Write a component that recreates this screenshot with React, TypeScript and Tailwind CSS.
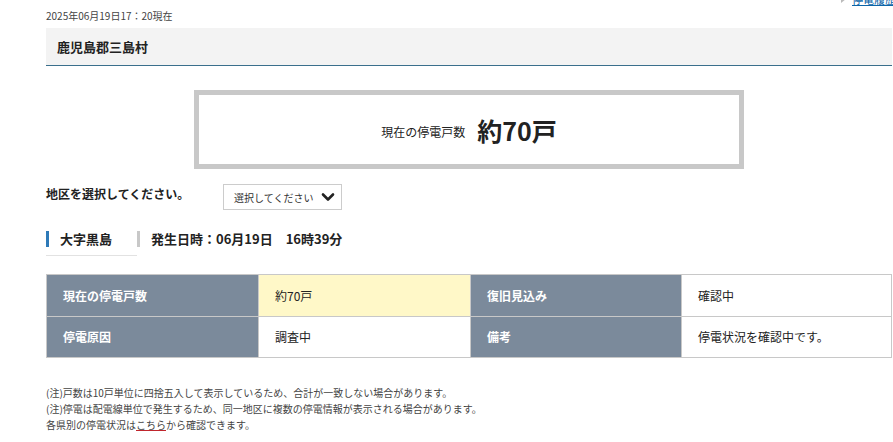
import React from 'react';

const font = { fontFamily: '"Noto Sans CJK JP", "Noto Sans", sans-serif' };

const Chevron: React.FC = () => (
  <svg width="14" height="10" viewBox="0 0 14 10" fill="none">
    <path d="M2 2.5 L7 7.5 L12 2.5" stroke="#222" strokeWidth="2.6" strokeLinecap="round" strokeLinejoin="round" />
  </svg>
);

const App: React.FC = () => {
  return (
    <div className="w-[893px] h-[442px] overflow-hidden bg-white text-[#333]" style={font}>
      <div className="relative ml-[46px] w-[846px]">
        <a className="absolute right-[-4px] top-[-9px] flex items-center gap-[6px] text-[11px] text-[#0b64a8] underline">
          <span className="inline-block w-0 h-0 border-y-[4px] border-y-transparent border-l-[5px] border-l-[#bbb]" />
          停電履歴
        </a>

        <div className="pt-[9px] h-[28px] text-[10px] leading-[14px] text-[#444]">2025年06月19日17：20現在</div>

        <div className="h-[38px] bg-[#f3f3f3] border-b-[1.5px] border-[#3a6f8c] flex items-center pl-[11px]">
          <h1 className="text-[13px] font-bold text-[#222]">鹿児島郡三島村</h1>
        </div>

        <div className="mt-[24px] mx-auto w-[550px] h-[79px] border-[5px] border-[#c8c8c8] flex items-center justify-center gap-[12px]">
          <span className="text-[12px] text-[#222] mt-[5px]">現在の停電戸数</span>
          <span className="text-[25px] font-bold text-[#222] leading-[30px]">約70戸</span>
        </div>

        <div className="mt-[15px] flex items-start">
          <p className="w-[177px] text-[12px] font-bold text-[#222] pt-[1px]">地区を選択してください。</p>
          <div className="w-[119px] h-[26px] border border-[#ccc] flex items-center justify-between pl-[10px] pr-[6px]">
            <span className="text-[10px] text-[#333]">選択してください</span>
            <Chevron />
          </div>
        </div>

        <div className="mt-[21px] flex items-center">
          <div className="w-[91px] h-[25px] border-b border-[#e2e2e2] pb-[8px] flex items-start">
            <div className="flex items-center h-[16px] border-l-[3px] border-[#2e7ab8] pl-[11px]">
              <span className="text-[13px] font-bold text-[#222]">大字黒島</span>
            </div>
          </div>
          <div className="self-start flex items-center h-[16px] border-l-[3px] border-[#c8c8c8] pl-[11px]">
            <span className="text-[13px] font-bold text-[#222]">発生日時：06月19日　16時39分</span>
          </div>
        </div>

        <table className="mt-[18px] w-[846px] border-collapse table-fixed text-[12px]">
          <tbody>
            <tr className="h-[42px]">
              <th className="w-[212px] border border-[#c8c8c8] bg-[#7b8a9b] text-white font-bold text-left pl-[16px]">現在の停電戸数</th>
              <td className="w-[212px] border border-[#c8c8c8] bg-[#fff8c8] text-[#222] pl-[16px]">約70戸</td>
              <th className="w-[211px] border border-[#c8c8c8] bg-[#7b8a9b] text-white font-bold text-left pl-[16px]">復旧見込み</th>
              <td className="border border-[#c8c8c8] bg-white text-[#222] pl-[16px]">確認中</td>
            </tr>
            <tr className="h-[41px]">
              <th className="border border-[#c8c8c8] bg-[#7b8a9b] text-white font-bold text-left pl-[16px]">停電原因</th>
              <td className="border border-[#c8c8c8] bg-white text-[#222] pl-[16px]">調査中</td>
              <th className="border border-[#c8c8c8] bg-[#7b8a9b] text-white font-bold text-left pl-[16px]">備考</th>
              <td className="border border-[#c8c8c8] bg-white text-[#222] pl-[16px]">停電状況を確認中です。</td>
            </tr>
          </tbody>
        </table>

        <div className="mt-[27px] text-[10px] leading-[16px] text-[#444]">
          <p>(注)戸数は10戸単位に四捨五入して表示しているため、合計が一致しない場合があります。</p>
          <p>(注)停電は配電線単位で発生するため、同一地区に複数の停電情報が表示される場合があります。</p>
          <p>
            各県別の停電状況は<a className="underline decoration-[#c0262d]">こちら</a>から確認できます。
          </p>
        </div>
      </div>
    </div>
  );
};

export default App;
